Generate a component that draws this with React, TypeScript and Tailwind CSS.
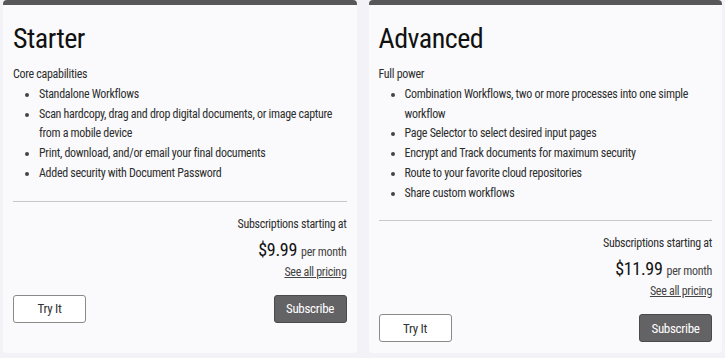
import React from "react";

type Plan = {
  name: string;
  tagline: string;
  features: string[];
  price: string;
};

const plans: Plan[] = [
  {
    name: "Starter",
    tagline: "Core capabilities",
    features: [
      "Standalone Workflows",
      "Scan hardcopy, drag and drop digital documents, or image capture from a mobile device",
      "Print, download, and/or email your final documents",
      "Added security with Document Password",
    ],
    price: "$9.99",
  },
  {
    name: "Advanced",
    tagline: "Full power",
    features: [
      "Combination Workflows, two or more processes into one simple workflow",
      "Page Selector to select desired input pages",
      "Encrypt and Track documents for maximum security",
      "Route to your favorite cloud repositories",
      "Share custom workflows",
    ],
    price: "$11.99",
  },
];

function PlanCard(props: { plan: Plan }) {
  const plan = props.plan;
  return (
    <div className="flex flex-col rounded-[4px] bg-[#fafafc] border-t-[5px] border-[#58585a] px-[10px] pt-[17px] pb-[10px] tracking-[-0.3px]">
      <h2 className="text-[28px] leading-[34px] text-[#111] tracking-[-0.5px]">{plan.name}</h2>
      <p className="mt-[9px] text-[12px] leading-[19.75px] text-[#2e2e2e]">{plan.tagline}</p>
      <ul className="list-disc pl-[26px] text-[12px] leading-[19.75px] text-[#2e2e2e] marker:text-[#444]">
        {plan.features.map((f) => (
          <li key={f}>{f}</li>
        ))}
      </ul>
      <hr className="mt-[17px] border-t border-[#c8c8c8]" />
      <div className="mt-[12px] flex flex-col items-end text-[#2e2e2e]">
        <div className="text-[12px] leading-[20px]">Subscriptions starting at</div>
        <div className="mt-[4px] flex items-baseline gap-[4px]">
          <span className="text-[18px] leading-[24px] text-[#111]">{plan.price}</span>
          <span className="text-[12px] text-[#444]">per month</span>
        </div>
        <a className="text-[12px] leading-[20px] underline text-[#444]">See all pricing</a>
      </div>
      <div className="mt-[13px] flex justify-between">
        <button className="w-[73px] h-[28px] rounded-[3px] border border-[#8a8a8a] bg-white text-[13px] text-[#333]">
          Try It
        </button>
        <button className="w-[73px] h-[28px] rounded-[3px] border border-[#4a4a4a] bg-[#636366] text-[13px] text-white">
          Subscribe
        </button>
      </div>
    </div>
  );
}

export default function App() {
  return (
    <div
      className="min-h-[358px] w-[725px] bg-[#f3f3f7] px-[3px] pb-[5px] grid grid-cols-2 gap-[12px]"
      style={{ fontFamily: '"Roboto Condensed", "Liberation Sans Narrow", "DejaVu Sans Condensed", Roboto, sans-serif' }}
    >
      {plans.map((p) => (
        <PlanCard key={p.name} plan={p} />
      ))}
    </div>
  );
}
